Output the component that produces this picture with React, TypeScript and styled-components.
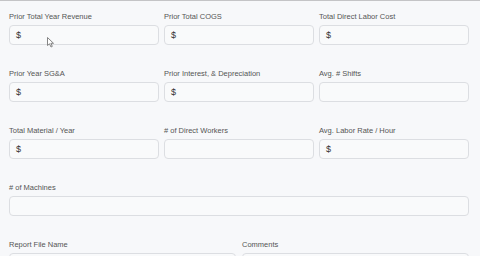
import { FC, ReactElement } from 'react';
import styled, { createGlobalStyle } from 'styled-components';

const GlobalStyle = createGlobalStyle`
  html, body {
    margin: 0;
    padding: 0;
    background: #f7f8fa;
    font-family: "Liberation Sans", Arial, sans-serif;
  }
`;

// Fields, in the order they appear on the form
type Field = { label: string; dollar?: boolean };

const rows: { cols: number; fields: Field[] }[] = [
  {
    cols: 3,
    fields: [
      { label: 'Prior Total Year Revenue', dollar: true },
      { label: 'Prior Total COGS', dollar: true },
      { label: 'Total Direct Labor Cost', dollar: true },
    ],
  },
  {
    cols: 3,
    fields: [
      { label: 'Prior Year SG&A', dollar: true },
      { label: 'Prior Interest, & Depreciation', dollar: true },
      { label: 'Avg. # Shifts' },
    ],
  },
  {
    cols: 3,
    fields: [
      { label: 'Total Material / Year', dollar: true },
      { label: '# of Direct Workers' },
      { label: 'Avg. Labor Rate / Hour', dollar: true },
    ],
  },
  { cols: 1, fields: [{ label: '# of Machines' }] },
  { cols: 2, fields: [{ label: 'Report File Name' }, { label: 'Comments' }] },
];

const App: FC = (): ReactElement => {
  return (
    <Page>
      <GlobalStyle />
      {rows.map((row, i) => (
        <Row key={i} $cols={row.cols}>
          {row.fields.map((f) => (
            <FieldWrap key={f.label}>
              <Label>{f.label}</Label>
              <InputBox>{f.dollar && <Dollar>$</Dollar>}</InputBox>
            </FieldWrap>
          ))}
        </Row>
      ))}

      {/* mouse pointer hovering the first field */}
      <Cursor width="7" height="11" viewBox="0 0 7 11">
        <path d="M0.5 0.5 L0.5 8.5 L2.5 6.8 L4 10 L5.3 9.4 L3.9 6.3 L6.5 6.3 Z" fill="#fff" stroke="#777" strokeWidth="0.9" strokeLinejoin="round" />
      </Cursor>
    </Page>
  );
};

const Page = styled.div`
  position: relative;
  border-top: 1px solid #c4c4c6;
  padding: 11px 11px 0 9px;
  height: 256px;
  box-sizing: border-box;
  overflow: hidden;
  display: flex;
  flex-direction: column;
  gap: 24px;
`;

const Row = styled.div<{ $cols: number }>`
  display: grid;
  grid-template-columns: repeat(${(p) => p.$cols}, 1fr);
  column-gap: ${(p) => (p.$cols === 2 ? 6 : 5)}px;
`;

const FieldWrap = styled.div`
  display: flex;
  flex-direction: column;
`;

const Label = styled.div`
  font-size: 7.5px;
  line-height: 10px;
  color: #555;
  margin-bottom: 3px;
  white-space: nowrap;
`;

const InputBox = styled.div`
  height: 20px;
  box-sizing: border-box;
  border: 1px solid #dcdee2;
  border-radius: 4px;
  background: #f9fafb;
  display: flex;
  align-items: center;
  padding-left: 6px;
`;

const Dollar = styled.span`
  font-size: 9px;
  color: #333;
`;

const Cursor = styled.svg`
  position: absolute;
  left: 47px;
  top: 36px;
`;

export default App;
